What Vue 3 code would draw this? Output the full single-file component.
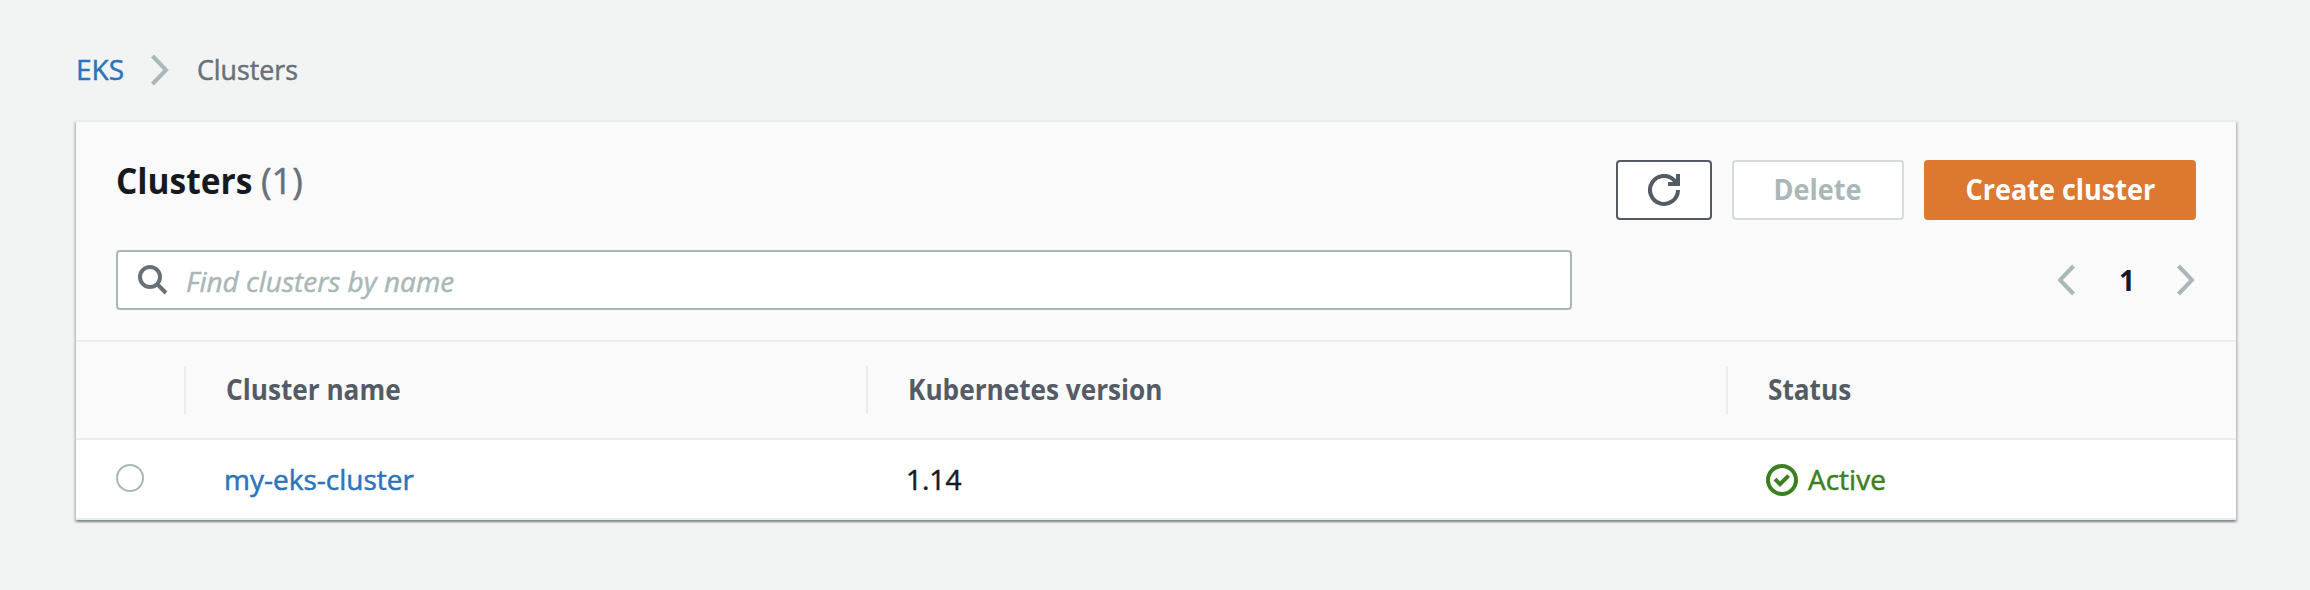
<script setup>
const columns = ['Cluster name', 'Kubernetes version', 'Status']
const clusters = [{ name: 'my-eks-cluster', version: '1.14', status: 'Active' }]
</script>

<template>
  <main class="page">
    <nav class="crumbs">
      <a class="link root">EKS</a>
      <svg class="sep" width="20" height="32" viewBox="0 0 20 32"><path d="M1.5 2 L15 16 L1.5 30" /></svg>
      <span class="current">Clusters</span>
    </nav>

    <section class="card">
      <header class="head">
        <div class="top">
          <h1 class="title"><span class="name">Clusters</span> <span class="count">(1)</span></h1>
          <div class="actions">
            <button class="btn refresh" aria-label="Refresh">
              <svg width="32" height="32" viewBox="0 0 32 32">
                <path d="M30 16 A14 14 0 1 1 26.6 6.8 L28.6 9.6" />
                <path d="M30 0 V10 H20" />
              </svg>
            </button>
            <button class="btn delete"><span class="label">Delete</span></button>
            <button class="btn create"><span class="label">Create cluster</span></button>
          </div>
        </div>
        <div class="tools">
          <div class="search">
            <svg width="30" height="30" viewBox="0 0 30 30">
              <circle cx="12" cy="12" r="10" />
              <path d="M19 19 L28 28" />
            </svg>
            <span class="placeholder">Find clusters by name</span>
          </div>
          <div class="pager">
            <svg width="20" height="32" viewBox="0 0 20 32"><path d="M15.5 2 L2 16 L15.5 30" /></svg>
            <span class="num">1</span>
            <svg width="20" height="32" viewBox="0 0 20 32"><path d="M2.5 2 L16 16 L2.5 30" /></svg>
          </div>
        </div>
      </header>

      <div class="row columns">
        <div class="cell"></div>
        <div v-for="c in columns" :key="c" class="cell"><span class="heading">{{ c }}</span></div>
      </div>
      <div v-for="c in clusters" :key="c.name" class="row item">
        <div class="cell pick"><span class="radio"></span></div>
        <div class="cell"><a class="link">{{ c.name }}</a></div>
        <div class="cell version">{{ c.version }}</div>
        <div class="cell status">
          <svg width="32" height="32" viewBox="0 0 32 32">
            <circle cx="16" cy="16" r="14" />
            <path d="M9 15.2 L14 20.2 L22.6 11.6" />
          </svg>
          <span>{{ c.status }}</span>
        </div>
      </div>
    </section>
  </main>
</template>

<style>
body { background: #f2f4f3; }
</style>

<style scoped>
.page {
  box-sizing: border-box;
  width: 2310px;
  height: 590px;
  padding: 51px 74px 0 76px;
  background: #f2f4f3;
  color: #16191f;
  font-family: "Open Sans", "Noto Sans", sans-serif;
  font-size: 28px;
  line-height: 36px;
  white-space: nowrap;
}
svg { display: block; flex: none; fill: none; stroke: #aab7b8; stroke-width: 4; }
.link { color: #2b74bd; }
.link, .current, .count, .version, .status span, .placeholder { -webkit-text-stroke: 0.5px currentColor; }

.crumbs { display: flex; align-items: center; height: 36px; margin-bottom: 33px; }
.root { box-sizing: border-box; width: 75px; }
.sep { margin: 2px 26px 0 0; }
.current { display: inline-block; color: #687078; transform: scaleX(.955); transform-origin: left; }

.card {
  border-top: 2px solid #eaeded;
  background: #fff;
  box-shadow:
    0 2px 2px 0 rgba(0, 28, 36, .3),
    2px 2px 2px 0 rgba(0, 28, 36, .15),
    -2px 2px 2px 0 rgba(0, 28, 36, .15);
}
.head {
  box-sizing: border-box;
  height: 220px;
  padding: 38px 40px 0;
  background: #fafafa;
  border-bottom: 2px solid #eaeded;
}
.top { display: flex; justify-content: space-between; height: 60px; }
.title { margin: -1px 0 0; font-size: 36px; line-height: 44px; font-weight: 700; }
.name { display: inline-block; transform: scaleX(.931); transform-origin: left; }
.count { margin-left: -11px; font-weight: 400; color: #687078; }
.actions { display: flex; gap: 20px; }
.btn {
  display: flex;
  align-items: center;
  justify-content: center;
  box-sizing: border-box;
  height: 60px;
  padding: 0 0 2px;
  border: 2px solid #545b64;
  border-radius: 4px;
  background: #fff;
  font: inherit;
  font-weight: 700;
}
.label { display: inline-block; transform: scaleX(.965); }
.refresh { width: 96px; padding: 0; }
.refresh svg { stroke: #545b64; }
.delete { width: 172px; border-color: #d5dbdb; color: #aab7b8; }
.create { width: 272px; border-color: #dd7831; background: #dd7831; color: #fff; }

.tools { display: flex; justify-content: space-between; margin-top: 30px; }
.search {
  display: flex;
  align-items: center;
  box-sizing: border-box;
  width: 1456px;
  height: 60px;
  padding-left: 20px;
  border: 2px solid #aab7b8;
  border-radius: 4px;
  background: #fff;
}
.search svg { stroke: #687078; }
.placeholder { margin: 1px 0 0 18px; font-style: italic; color: #aab7b8; }
.pager { display: flex; align-items: center; height: 60px; }
.num { width: 98px; text-align: center; font-weight: 700; }

.row {
  display: grid;
  grid-template-columns: 108px 682px 860px 1fr;
  border-bottom: 2px solid #eaeded;
}
.columns { height: 96px; align-items: center; background: #fafafa; color: #545b64; font-weight: 700; }
.columns .cell { box-sizing: border-box; height: 48px; padding: 4px 0 0 40px; line-height: 38px; }
.columns .cell + .cell { border-left: 2px solid #eaeded; }
.heading { display: inline-block; transform: scaleX(.935); transform-origin: left; }
.item { height: 78px; align-items: center; }
.item .cell { padding-left: 40px; }
.item .pick { padding: 0 0 2px 40px; }
.radio {
  display: block;
  box-sizing: border-box;
  width: 28px;
  height: 28px;
  border: 2px solid #aab7b8;
  border-radius: 50%;
}
.status { display: flex; align-items: center; gap: 10px; color: #3a8020; }
.status svg { margin-top: 2px; stroke: #3a8020; }
</style>
